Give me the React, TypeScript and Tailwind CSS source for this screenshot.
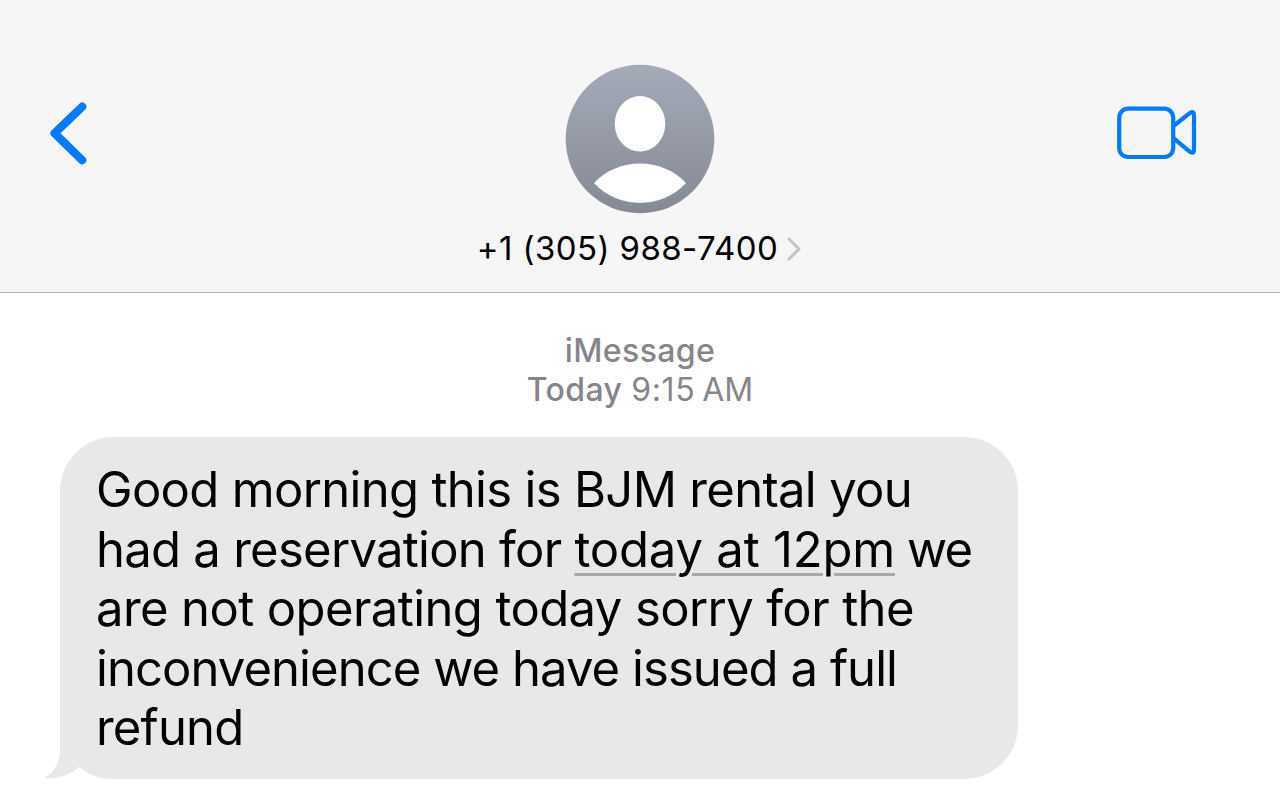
import React from 'react';

const BackIcon: React.FC = () => (
  <svg className="h-[66px] w-[40px]" viewBox="0 0 40 66" fill="none">
    <path d="M33.2 6.7L5.6 33.3L33.2 60.2" stroke="#007aff" strokeWidth="8.2" strokeLinecap="round" strokeLinejoin="round" />
  </svg>
);

const VideoIcon: React.FC = () => (
  <svg className="h-[54px] w-[80px]" viewBox="0 0 80 54" fill="none" stroke="#007aff" strokeWidth="4.2">
    <rect x="2.2" y="2.6" width="54" height="48.4" rx="9" />
    <path d="M56.500 20L72 7.600Q77 4 77 9.600V43.500Q77 49 72 45.200L56.500 32.200" strokeLinejoin="round" />
  </svg>
);

const Avatar: React.FC = () => (
  <svg className="h-[150px] w-[150px]" viewBox="0 0 150 150">
    <defs>
      <linearGradient id="avatar" x1="0" y1="0" x2="0" y2="1">
        <stop offset="0" stopColor="#a5abb9" />
        <stop offset="1" stopColor="#858994" />
      </linearGradient>
    </defs>
    <circle cx="75" cy="75" r="74.3" fill="url(#avatar)" />
    <ellipse cx="75" cy="59.8" rx="25.3" ry="27.7" fill="#fff" />
    <path d="M29 119C53 93 97 93 121 119C97 145.500 53 145.500 29 119Z" fill="#fff" />
  </svg>
);

const App: React.FC = () => {
  return (
    <div className="h-[801px] w-[1280px] overflow-hidden bg-white font-['Inter',sans-serif] text-black">
      <header className="flex h-[293px] items-start justify-between border-b border-[#b2b2b4] bg-[#f6f6f6] pl-[49px] pr-[83px]">
        <button className="mt-[100px] flex w-[80px]"><BackIcon /></button>
        <div className="mr-[-34px] flex flex-col items-center pt-[64px]">
          <Avatar />
          <div className="mt-[14px] flex h-[40px] items-center gap-[9px]">
            <span className="whitespace-nowrap text-[33px] leading-[40px] tracking-[0.41px]">+1 (305) 988-7400</span>
            <svg className="mr-[2px] mt-[2px] h-[24px] w-[14px]" viewBox="0 0 14 24" fill="none">
              <path d="M2 2L12 12L2 22" stroke="#c4c4c6" strokeWidth="3" strokeLinecap="round" strokeLinejoin="round" />
            </svg>
          </div>
        </div>
        <button className="mt-[106px] flex"><VideoIcon /></button>
      </header>

      <main>
        <div className="flex flex-col items-center pt-[38px] text-[32px] leading-[39px] text-[#85858a]">
          <div className="font-medium tracking-[0.4px]">iMessage</div>
          <div className="flex">
            <span className="font-medium tracking-[0.4px]">Today</span>
            <span className="ml-[9px] tracking-[0.6px]">9:15</span>
            <span className="ml-[7px]">AM</span>
          </div>
        </div>

        <div className="relative ml-[60px] mt-[28px] h-[342px] w-[958px] rounded-[54px] bg-[#e8e8ea] pl-[36px] pt-[23px] text-[49px] leading-[59.500px]">
          <svg className="absolute bottom-0 left-[-16px] h-[54px] w-[70px]" viewBox="0 0 70 54">
            <path d="M16 0V24C16 38 10 48 0 53C14 55 26 50 35 42C45 51 57 54 70 54V0Z" fill="#e8e8ea" />
            <path d="M35 42C45 51 57 54 70 54H18C25 51 30 47 35 42Z" fill="#fff" />
          </svg>
          <p className="relative whitespace-nowrap">
            <span className="block tracking-[-0.68px]">Good morning this is BJM rental you</span>
            <span className="block tracking-[-0.73px]">
              had a reservation for{' '}
              <span className="tracking-[-0.2px] underline decoration-[#a8a8ab] decoration-[3px] underline-offset-[6px]">today at 12pm</span>
              <span className="tracking-[-1.8px]"> we</span>
            </span>
            <span className="block tracking-[-0.6px]">are not operating today sorry for the</span>
            <span className="block tracking-[-0.93px]">inconvenience we have issued a full</span>
            <span className="block tracking-[-0.8px]">refund</span>
          </p>
        </div>
      </main>
    </div>
  );
};

export default App;
